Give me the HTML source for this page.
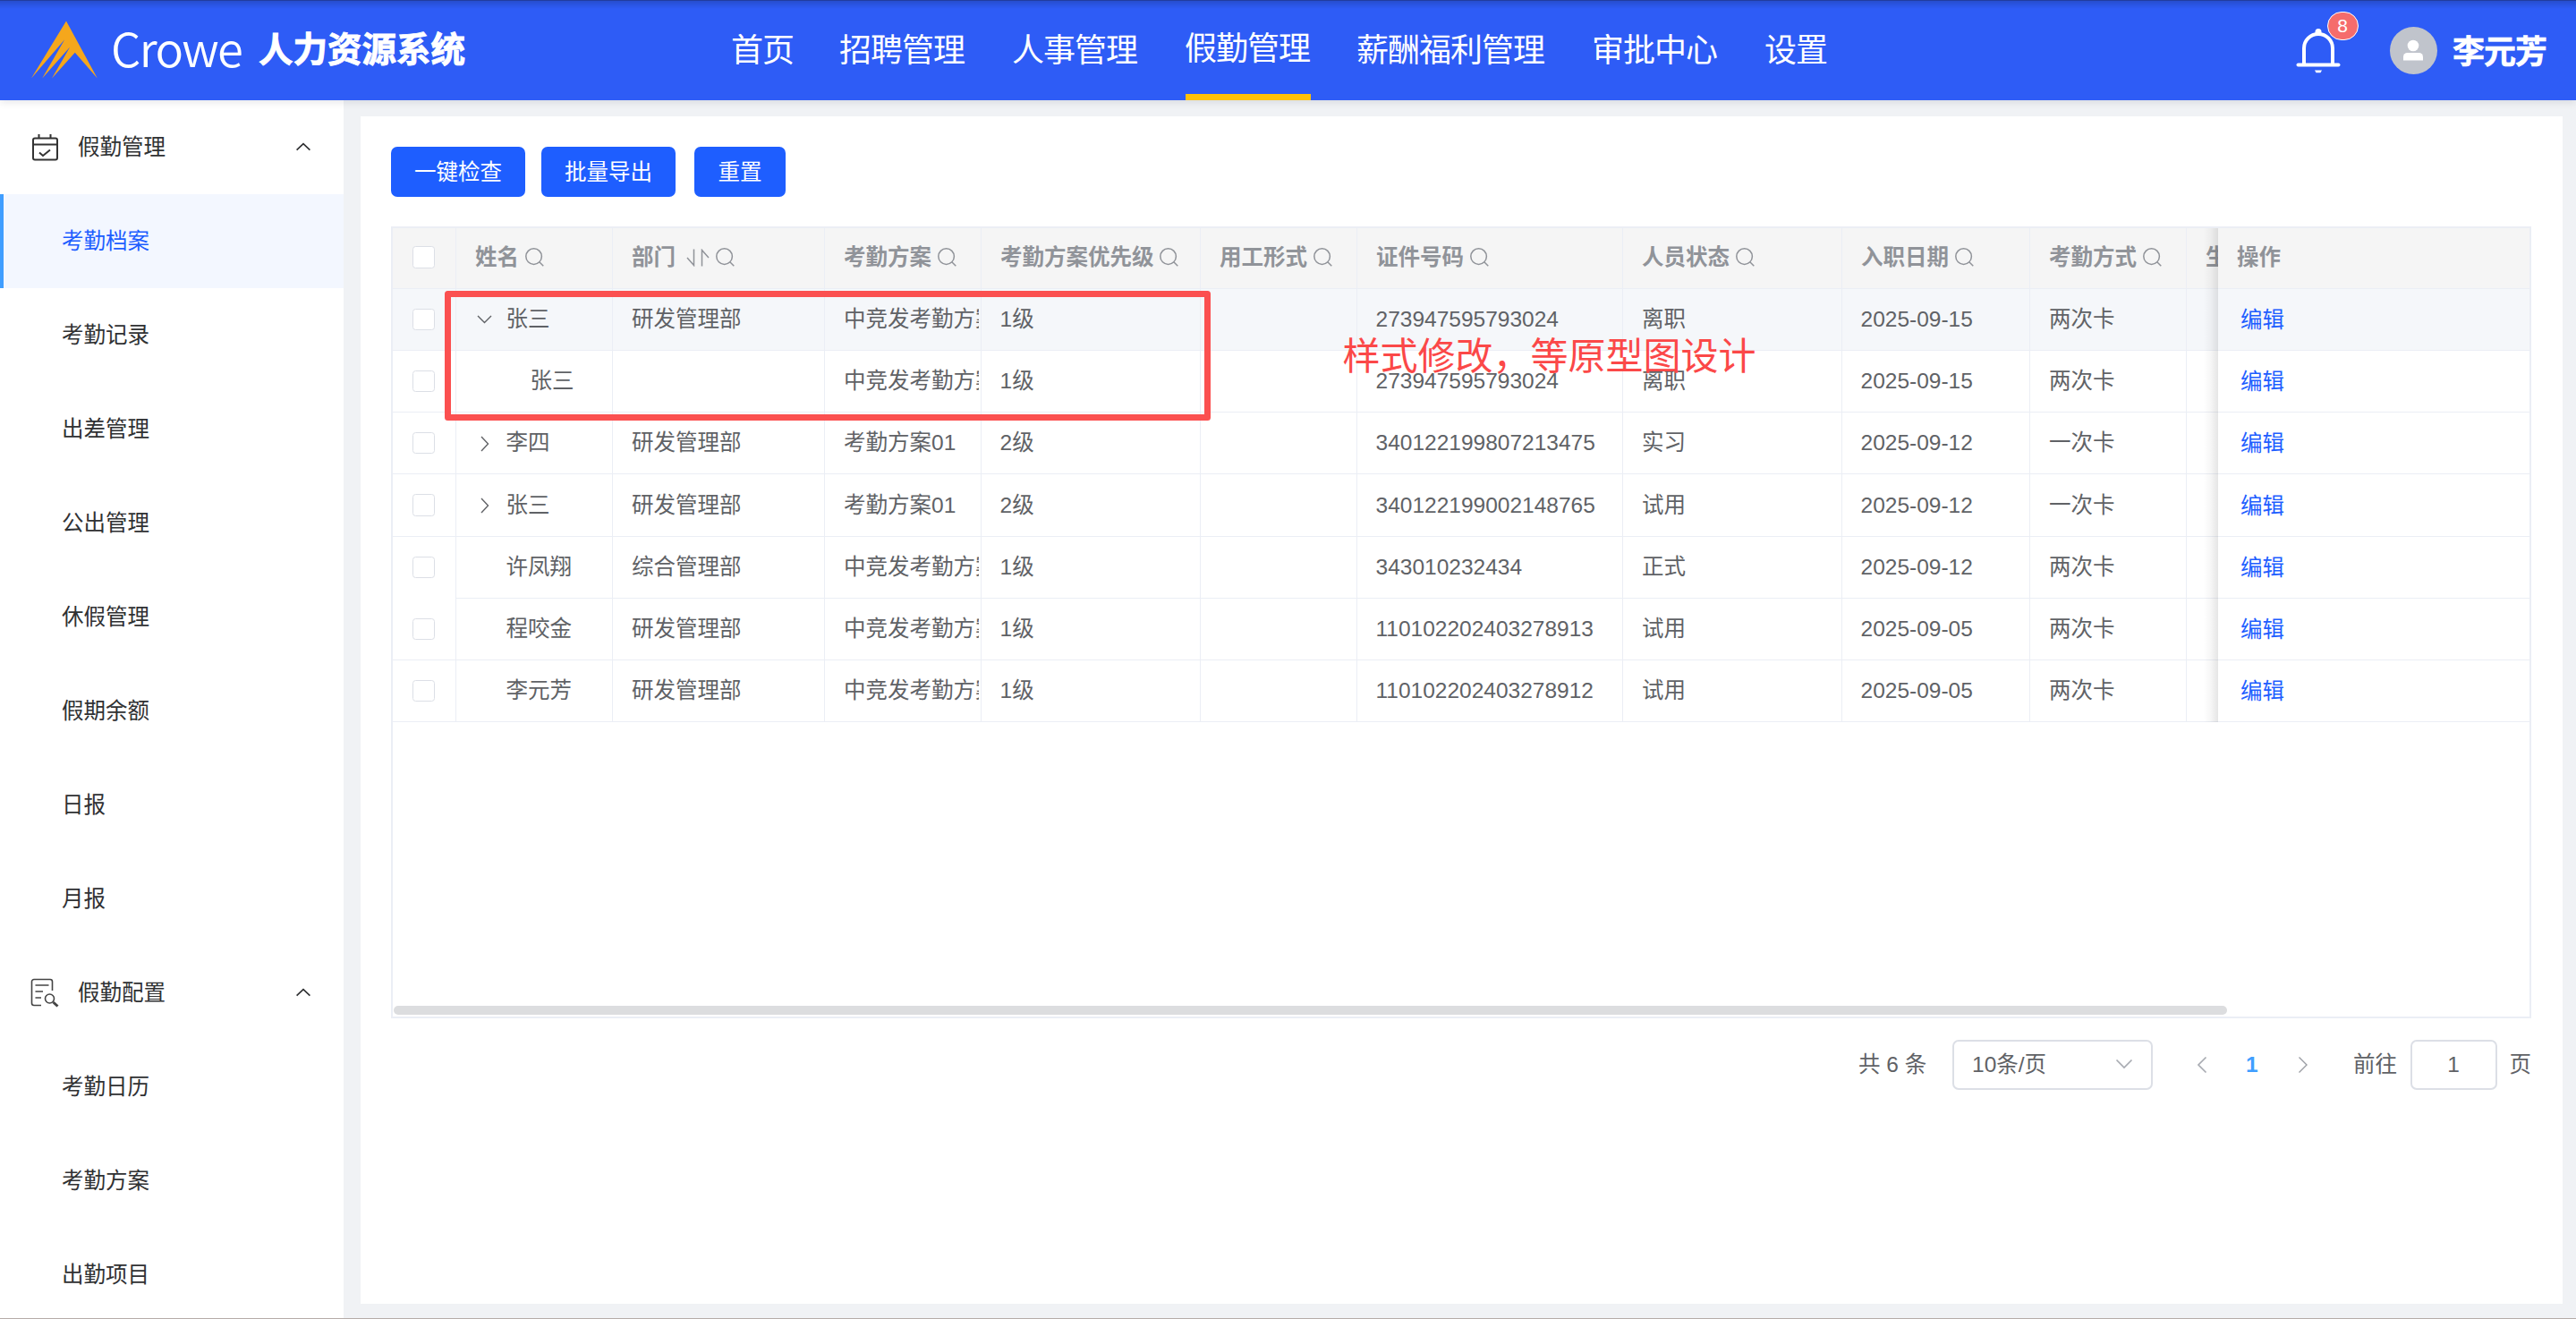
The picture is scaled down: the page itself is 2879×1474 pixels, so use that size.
<!DOCTYPE html>
<html lang="zh-CN">
<head>
<meta charset="utf-8">
<title>Crowe 人力资源系统</title>
<style>
*{box-sizing:border-box;margin:0;padding:0}
html,body{width:2879px;height:1474px;overflow:hidden;background:#f0f2f5}
body{position:relative;font-family:"Liberation Sans","Noto Sans CJK SC",sans-serif;font-size:24.5px;color:#606266;-webkit-font-smoothing:antialiased}
.abs{position:absolute}
/* header */
#hd{position:absolute;left:0;top:0;width:2879px;height:112px;background:#2e5cf6;box-shadow:0 2px 9px rgba(0,21,41,.11);z-index:10}
#hd .topline{position:absolute;left:0;top:0;width:100%;height:10px;background:linear-gradient(rgba(0,0,0,.16),rgba(0,0,0,0));border-top:1px solid rgba(25,35,90,.55)}
#logo{position:absolute;left:0;top:0}
#crowe{position:absolute;left:124px;top:10px;font-family:"Noto Sans CJK SC","Liberation Sans",sans-serif;font-weight:350;font-size:52.5px;line-height:84px;color:#fff;letter-spacing:-1.6px;white-space:nowrap}
#sys{position:absolute;left:289px;top:0;font-weight:bold;font-size:38.5px;line-height:112px;-webkit-text-stroke:0.9px #fff;color:#fff;white-space:nowrap;font-family:"Liberation Sans","Noto Sans CJK SC",sans-serif}
.nav{position:absolute;top:0;height:112px;line-height:113px;font-size:36px;letter-spacing:-1px;color:#fff;white-space:nowrap;font-family:"Liberation Sans","Noto Sans CJK SC",sans-serif}
.nav.on{line-height:109px}
.nav.on:after{content:"";position:absolute;left:1px;right:-1px;bottom:0;height:7px;background:#ffc107}
#uname{position:absolute;left:2741px;top:0;line-height:117px;font-size:36px;letter-spacing:-1px;-webkit-text-stroke:0.6px #fff;font-weight:bold;color:#fff;font-family:"Liberation Sans","Noto Sans CJK SC",sans-serif}
#avatar{position:absolute;left:2670.5px;top:29.5px;width:53px;height:53px;border-radius:50%;background:#c0c4cc}
#badge{position:absolute;left:2600.7px;top:12.6px;width:35px;height:32px;border-radius:17px;background:#f56c6c;border:1.5px solid #fff;color:#fff;font-size:21px;line-height:29px;text-align:center}
/* sidebar */
#sb{position:absolute;left:0;top:112px;width:384px;height:1361px;background:#fff}
.mi{position:absolute;left:0;width:384px;height:105px;line-height:106.5px;color:#303133;white-space:nowrap;font-family:"Liberation Sans","Noto Sans CJK SC",sans-serif}
.mi span{position:absolute;left:69px}
.mi.top span{left:87px}
.mi.act{background:#f3f7ff;color:#1e5eff}
.mi.act:before{content:"";position:absolute;left:0;top:0;width:4px;height:100%;background:#409eff}
.mi svg{position:absolute}
/* card */
#card{position:absolute;left:403px;top:130px;width:2461px;height:1327px;background:#fff}
.btn{position:absolute;top:164px;height:56px;line-height:58px;border-radius:7px;background:#1e5eff;color:#fff;text-align:center;font-size:24.5px;font-family:"Liberation Sans","Noto Sans CJK SC",sans-serif}
/* table */
#tb{position:absolute;left:437px;top:253px;width:2392px;height:885px;border:2px solid #ebeef5;background:#fff;overflow:hidden}
.row{position:absolute;left:0;width:2388px;border-bottom:1px solid #ebeef5}
.row.h{background:#f5f5f5;color:#909399;font-weight:bold}
.row.hv{background:#f5f7fa}
.c{position:absolute;top:0;height:100%;border-right:1px solid #ebeef5;white-space:nowrap;overflow:hidden;padding-left:21px;font-family:"Liberation Sans","Noto Sans CJK SC",sans-serif}
.row.h .c{font-family:"Liberation Sans","Noto Sans CJK SC",sans-serif;display:flex;align-items:center}
.row.h .ht{position:relative;top:-1px}
.ck{position:absolute;left:22.3px;width:24.5px;height:24.5px;border:1.75px solid #dcdfe6;border-radius:3.5px;background:#fff}
.lk{color:#1e5eff}

.si{display:block;margin-left:6.5px;margin-top:-3px;flex:none}
.so{display:block;margin-left:12px;margin-top:-2px;flex:none}
.ch{position:absolute}
.tx{overflow:hidden;margin-right:2px}
#fix{position:absolute;background:#fff}
#fix:before{content:"";position:absolute;left:-16px;top:0;width:16px;height:100%;background:linear-gradient(to right,rgba(0,0,0,0),rgba(0,0,0,.03) 45%,rgba(0,0,0,.10))}
.frow{position:absolute;left:0;width:100%;border-bottom:1px solid #ebeef5;white-space:nowrap;font-family:"Liberation Sans","Noto Sans CJK SC",sans-serif;background:#fff}
.frow.h{background:#f5f5f5;color:#909399;font-weight:bold}
.frow span{position:relative;top:0.5px}
.frow.h span{top:-1.5px}
.frow.hv{background:#f5f7fa}
#scroll{position:absolute;left:1px;top:868.6px;width:2049px;height:10.2px;border-radius:5px;background:#dcdddf}
#redbox{position:absolute;left:497px;top:325.3px;width:855.5px;height:144.7px;border:7.2px solid #fb5050;border-radius:3.5px;z-index:5}
#redtxt{position:absolute;left:1500.5px;top:369px;font-size:42px;line-height:60px;color:#fb4848;white-space:nowrap;z-index:5;font-family:"Liberation Sans","Noto Sans CJK SC",sans-serif}
.pg{position:absolute;top:1162px;height:56px;line-height:56px;white-space:nowrap;color:#606266}
.box{border:2px solid #dcdfe6;border-radius:7px;background:#fff}
#bottomline{position:absolute;left:0;top:1473px;width:2879px;height:1px;background:#b5aca8}
</style>
</head>
<body>
<div id="hd">
<div class="topline"></div>
<svg id="logo" width="130" height="112" viewBox="0 0 130 112"><polygon fill="#f5a71c" points="74,23.5 108.8,87.6 83.8,58.7 58,87.6 78.2,52.4 47.2,87.6 72.2,44.2 35,87.6"/></svg>
<div id="crowe">Crowe</div>
<div id="sys">人力资源系统</div>
<div class="nav" style="left:817px">首页</div>
<div class="nav" style="left:938px">招聘管理</div>
<div class="nav" style="left:1131px">人事管理</div>
<div class="nav on" style="left:1324px">假勤管理</div>
<div class="nav" style="left:1516px">薪酬福利管理</div>
<div class="nav" style="left:1779px">审批中心</div>
<div class="nav" style="left:1972px">设置</div>
<svg class="abs" style="left:2560px;top:28px" width="62" height="58" viewBox="0 0 62 58"><g fill="none" stroke="#fff" stroke-width="4" stroke-linecap="round" stroke-linejoin="round"><path d="M8.5 44.5 H53.5"/><path d="M15 44 V26 a16 16 0 0 1 32 0 V44"/></g><circle cx="31" cy="7.5" r="3.5" fill="#fff"/><path d="M27 50.5 h8 l-1.5 2.7 h-5z" fill="#fff"/></svg>
<div id="badge">8</div>
<div id="avatar"><svg width="53" height="53" viewBox="0 0 53 53"><circle cx="26" cy="21" r="6.3" fill="#fff"/><path d="M15 37.5 v-4 a4.5 4.5 0 0 1 4.5 -4.5 h13 a4.5 4.5 0 0 1 4.5 4.5 v4z" fill="#fff"/></svg></div>
<div id="uname">李元芳</div>
</div>

<div id="sb">
<div class="mi top" style="top:0"><svg style="left:35px;top:37px" width="32" height="32" viewBox="0 0 32 32" fill="none" stroke="#333" stroke-width="2"><rect x="2" y="5.5" width="27" height="24" rx="2"/><path d="M2 12.5 H29 M8.5 1 V6 M21.5 1 V6 M9 21.5 l4 3.5 l8-6.5"/></svg><span>假勤管理</span><svg style="left:329px;top:46px" width="20" height="12" viewBox="0 0 20 12" fill="none" stroke="#303133" stroke-width="1.7"><path d="M2.6 9.6 L10 2.6 L17.4 9.6"/></svg></div>
<div class="mi act" style="top:105px"><span>考勤档案</span></div>
<div class="mi" style="top:210px"><span>考勤记录</span></div>
<div class="mi" style="top:315px"><span>出差管理</span></div>
<div class="mi" style="top:420px"><span>公出管理</span></div>
<div class="mi" style="top:525px"><span>休假管理</span></div>
<div class="mi" style="top:630px"><span>假期余额</span></div>
<div class="mi" style="top:735px"><span>日报</span></div>
<div class="mi" style="top:840px"><span>月报</span></div>
<div class="mi top" style="top:945px"><svg style="left:34px;top:36px" width="34" height="34" viewBox="0 0 34 34" fill="none" stroke="#444" stroke-width="1.6"><path d="M12 30.5 H4 a2.5 2.5 0 0 1 -2.5 -2.5 V4 a2.5 2.5 0 0 1 2.5 -2.5 H22 a2.5 2.5 0 0 1 2.5 2.5 V14"/><path d="M5.5 8 H20.5 M5.5 15 H14 M5.5 22 H12"/><circle cx="21.5" cy="23" r="5"/><path d="M25.5 27 L30.5 31.5" stroke-width="3"/></svg><span>假勤配置</span><svg style="left:329px;top:46px" width="20" height="12" viewBox="0 0 20 12" fill="none" stroke="#303133" stroke-width="1.7"><path d="M2.6 9.6 L10 2.6 L17.4 9.6"/></svg></div>
<div class="mi" style="top:1050px"><span>考勤日历</span></div>
<div class="mi" style="top:1155px"><span>考勤方案</span></div>
<div class="mi" style="top:1260px"><span>出勤项目</span></div>
</div>

<div id="card"></div>
<div class="btn" style="left:437px;width:150px">一键检查</div>
<div class="btn" style="left:605px;width:150px">批量导出</div>
<div class="btn" style="left:776px;width:102px">重置</div>

<div id="tb">
<div class="row h" style="top:0;height:68px;line-height:67px"><div class="c" style="left:0px;width:71px;padding:0;display:block"><div class="ck" style="top:20.2px"></div></div><div class="c" style="left:71px;width:175px;"><span class="ht">姓名</span><svg class="si" width="21" height="21" viewBox="0 0 21 21" fill="none" stroke="#909399" stroke-width="1.5"><circle cx="9.6" cy="9.6" r="8.8"/><path d="M15.8 15.8 L20.3 20.3"/></svg></div><div class="c" style="left:246px;width:237px;"><span class="ht">部门</span><svg class="so" width="26" height="20" viewBox="0 0 26 20" fill="none" stroke="#909399" stroke-width="1.5"><path d="M8.5 0.5 V18.5 L1 10 M17.5 19.5 V1.5 L25 10"/></svg><svg class="si" width="21" height="21" viewBox="0 0 21 21" fill="none" stroke="#909399" stroke-width="1.5"><circle cx="9.6" cy="9.6" r="8.8"/><path d="M15.8 15.8 L20.3 20.3"/></svg></div><div class="c" style="left:483px;width:175px;"><span class="ht">考勤方案</span><svg class="si" width="21" height="21" viewBox="0 0 21 21" fill="none" stroke="#909399" stroke-width="1.5"><circle cx="9.6" cy="9.6" r="8.8"/><path d="M15.8 15.8 L20.3 20.3"/></svg></div><div class="c" style="left:658px;width:245px;"><span class="ht">考勤方案优先级</span><svg class="si" width="21" height="21" viewBox="0 0 21 21" fill="none" stroke="#909399" stroke-width="1.5"><circle cx="9.6" cy="9.6" r="8.8"/><path d="M15.8 15.8 L20.3 20.3"/></svg></div><div class="c" style="left:903px;width:175px;"><span class="ht">用工形式</span><svg class="si" width="21" height="21" viewBox="0 0 21 21" fill="none" stroke="#909399" stroke-width="1.5"><circle cx="9.6" cy="9.6" r="8.8"/><path d="M15.8 15.8 L20.3 20.3"/></svg></div><div class="c" style="left:1078px;width:297px;"><span class="ht">证件号码</span><svg class="si" width="21" height="21" viewBox="0 0 21 21" fill="none" stroke="#909399" stroke-width="1.5"><circle cx="9.6" cy="9.6" r="8.8"/><path d="M15.8 15.8 L20.3 20.3"/></svg></div><div class="c" style="left:1375px;width:245px;"><span class="ht">人员状态</span><svg class="si" width="21" height="21" viewBox="0 0 21 21" fill="none" stroke="#909399" stroke-width="1.5"><circle cx="9.6" cy="9.6" r="8.8"/><path d="M15.8 15.8 L20.3 20.3"/></svg></div><div class="c" style="left:1620px;width:210px;"><span class="ht">入职日期</span><svg class="si" width="21" height="21" viewBox="0 0 21 21" fill="none" stroke="#909399" stroke-width="1.5"><circle cx="9.6" cy="9.6" r="8.8"/><path d="M15.8 15.8 L20.3 20.3"/></svg></div><div class="c" style="left:1830px;width:175px;"><span class="ht">考勤方式</span><svg class="si" width="21" height="21" viewBox="0 0 21 21" fill="none" stroke="#909399" stroke-width="1.5"><circle cx="9.6" cy="9.6" r="8.8"/><path d="M15.8 15.8 L20.3 20.3"/></svg></div><div class="c" style="left:2005px;width:210px;"><span class="ht">生效日期</span><svg class="si" width="21" height="21" viewBox="0 0 21 21" fill="none" stroke="#909399" stroke-width="1.5"><circle cx="9.6" cy="9.6" r="8.8"/><path d="M15.8 15.8 L20.3 20.3"/></svg></div></div>
<div class="row hv" style="top:68px;height:69px;line-height:68px"><div class="c" style="left:0px;width:71px;padding:0"><div class="ck" style="top:21.8px"></div></div><div class="c" style="left:71px;width:175px;padding-left:55.5px"><svg class="ch" style="left:23px;top:50%;margin-top:-5px" width="17" height="10" viewBox="0 0 17 10" fill="none" stroke="#606266" stroke-width="1.4"><path d="M1 1 L8.5 8.5 L16 1"/></svg><span>张三</span></div><div class="c" style="left:246px;width:237px;"><div class="tx">研发管理部</div></div><div class="c" style="left:483px;width:175px;"><div class="tx">中竞发考勤方案</div></div><div class="c" style="left:658px;width:245px;padding-left:20.5px"><div class="tx">1级</div></div><div class="c" style="left:903px;width:175px;"></div><div class="c" style="left:1078px;width:297px;padding-left:20.5px"><div class="tx">273947595793024</div></div><div class="c" style="left:1375px;width:245px;"><div class="tx">离职</div></div><div class="c" style="left:1620px;width:210px;padding-left:20.5px"><div class="tx">2025-09-15</div></div><div class="c" style="left:1830px;width:175px;"><div class="tx">两次卡</div></div><div class="c" style="left:2005px;width:210px;"></div></div>
<div class="row" style="top:137px;height:69px;line-height:68px"><div class="c" style="left:0px;width:71px;padding:0"><div class="ck" style="top:21.8px"></div></div><div class="c" style="left:71px;width:175px;padding-left:82.5px"><span>张三</span></div><div class="c" style="left:246px;width:237px;"></div><div class="c" style="left:483px;width:175px;"><div class="tx">中竞发考勤方案</div></div><div class="c" style="left:658px;width:245px;padding-left:20.5px"><div class="tx">1级</div></div><div class="c" style="left:903px;width:175px;"></div><div class="c" style="left:1078px;width:297px;padding-left:20.5px"><div class="tx">273947595793024</div></div><div class="c" style="left:1375px;width:245px;"><div class="tx">离职</div></div><div class="c" style="left:1620px;width:210px;padding-left:20.5px"><div class="tx">2025-09-15</div></div><div class="c" style="left:1830px;width:175px;"><div class="tx">两次卡</div></div><div class="c" style="left:2005px;width:210px;"></div></div>
<div class="row" style="top:206px;height:69px;line-height:68px"><div class="c" style="left:0px;width:71px;padding:0"><div class="ck" style="top:21.8px"></div></div><div class="c" style="left:71px;width:175px;padding-left:55.5px"><svg class="ch" style="left:27px;top:50%;margin-top:-8.5px" width="10" height="18" viewBox="0 0 10 18" fill="none" stroke="#606266" stroke-width="1.4"><path d="M1 1 L8.5 9 L1 17"/></svg><span>李四</span></div><div class="c" style="left:246px;width:237px;"><div class="tx">研发管理部</div></div><div class="c" style="left:483px;width:175px;"><div class="tx">考勤方案01</div></div><div class="c" style="left:658px;width:245px;padding-left:20.5px"><div class="tx">2级</div></div><div class="c" style="left:903px;width:175px;"></div><div class="c" style="left:1078px;width:297px;padding-left:20.5px"><div class="tx">340122199807213475</div></div><div class="c" style="left:1375px;width:245px;"><div class="tx">实习</div></div><div class="c" style="left:1620px;width:210px;padding-left:20.5px"><div class="tx">2025-09-12</div></div><div class="c" style="left:1830px;width:175px;"><div class="tx">一次卡</div></div><div class="c" style="left:2005px;width:210px;"></div></div>
<div class="row" style="top:275px;height:70px;line-height:69px"><div class="c" style="left:0px;width:71px;padding:0"><div class="ck" style="top:22.2px"></div></div><div class="c" style="left:71px;width:175px;padding-left:55.5px"><svg class="ch" style="left:27px;top:50%;margin-top:-8.5px" width="10" height="18" viewBox="0 0 10 18" fill="none" stroke="#606266" stroke-width="1.4"><path d="M1 1 L8.5 9 L1 17"/></svg><span>张三</span></div><div class="c" style="left:246px;width:237px;"><div class="tx">研发管理部</div></div><div class="c" style="left:483px;width:175px;"><div class="tx">考勤方案01</div></div><div class="c" style="left:658px;width:245px;padding-left:20.5px"><div class="tx">2级</div></div><div class="c" style="left:903px;width:175px;"></div><div class="c" style="left:1078px;width:297px;padding-left:20.5px"><div class="tx">340122199002148765</div></div><div class="c" style="left:1375px;width:245px;"><div class="tx">试用</div></div><div class="c" style="left:1620px;width:210px;padding-left:20.5px"><div class="tx">2025-09-12</div></div><div class="c" style="left:1830px;width:175px;"><div class="tx">一次卡</div></div><div class="c" style="left:2005px;width:210px;"></div></div>
<div class="row" style="top:345px;height:69px;line-height:68px"><div class="c" style="left:0px;width:71px;padding:0;height:calc(100% + 1px);background:#fff;z-index:1"><div class="ck" style="top:21.8px"></div></div><div class="c" style="left:71px;width:175px;padding-left:55.5px"><span>许凤翔</span></div><div class="c" style="left:246px;width:237px;"><div class="tx">综合管理部</div></div><div class="c" style="left:483px;width:175px;"><div class="tx">中竞发考勤方案</div></div><div class="c" style="left:658px;width:245px;padding-left:20.5px"><div class="tx">1级</div></div><div class="c" style="left:903px;width:175px;"></div><div class="c" style="left:1078px;width:297px;padding-left:20.5px"><div class="tx">343010232434</div></div><div class="c" style="left:1375px;width:245px;"><div class="tx">正式</div></div><div class="c" style="left:1620px;width:210px;padding-left:20.5px"><div class="tx">2025-09-12</div></div><div class="c" style="left:1830px;width:175px;"><div class="tx">两次卡</div></div><div class="c" style="left:2005px;width:210px;"></div></div>
<div class="row" style="top:414px;height:69px;line-height:68px"><div class="c" style="left:0px;width:71px;padding:0"><div class="ck" style="top:21.8px"></div></div><div class="c" style="left:71px;width:175px;padding-left:55.5px"><span>程咬金</span></div><div class="c" style="left:246px;width:237px;"><div class="tx">研发管理部</div></div><div class="c" style="left:483px;width:175px;"><div class="tx">中竞发考勤方案</div></div><div class="c" style="left:658px;width:245px;padding-left:20.5px"><div class="tx">1级</div></div><div class="c" style="left:903px;width:175px;"></div><div class="c" style="left:1078px;width:297px;padding-left:20.5px"><div class="tx">110102202403278913</div></div><div class="c" style="left:1375px;width:245px;"><div class="tx">试用</div></div><div class="c" style="left:1620px;width:210px;padding-left:20.5px"><div class="tx">2025-09-05</div></div><div class="c" style="left:1830px;width:175px;"><div class="tx">两次卡</div></div><div class="c" style="left:2005px;width:210px;"></div></div>
<div class="row" style="top:483px;height:69px;line-height:68px"><div class="c" style="left:0px;width:71px;padding:0"><div class="ck" style="top:21.8px"></div></div><div class="c" style="left:71px;width:175px;padding-left:55.5px"><span>李元芳</span></div><div class="c" style="left:246px;width:237px;"><div class="tx">研发管理部</div></div><div class="c" style="left:483px;width:175px;"><div class="tx">中竞发考勤方案</div></div><div class="c" style="left:658px;width:245px;padding-left:20.5px"><div class="tx">1级</div></div><div class="c" style="left:903px;width:175px;"></div><div class="c" style="left:1078px;width:297px;padding-left:20.5px"><div class="tx">110102202403278912</div></div><div class="c" style="left:1375px;width:245px;"><div class="tx">试用</div></div><div class="c" style="left:1620px;width:210px;padding-left:20.5px"><div class="tx">2025-09-05</div></div><div class="c" style="left:1830px;width:175px;"><div class="tx">两次卡</div></div><div class="c" style="left:2005px;width:210px;"></div></div>
<div id="fix" style="left:2040px;top:0;width:348px;height:552px"><div class="frow h" style="top:0;height:68px;line-height:67px"><span style="margin-left:21px">操作</span></div><div class="frow hv" style="top:68px;height:69px;line-height:68px"><span class="lk" style="margin-left:25px">编辑</span></div><div class="frow" style="top:137px;height:69px;line-height:68px"><span class="lk" style="margin-left:25px">编辑</span></div><div class="frow" style="top:206px;height:69px;line-height:68px"><span class="lk" style="margin-left:25px">编辑</span></div><div class="frow" style="top:275px;height:70px;line-height:69px"><span class="lk" style="margin-left:25px">编辑</span></div><div class="frow" style="top:345px;height:69px;line-height:68px"><span class="lk" style="margin-left:25px">编辑</span></div><div class="frow" style="top:414px;height:69px;line-height:68px"><span class="lk" style="margin-left:25px">编辑</span></div><div class="frow" style="top:483px;height:69px;line-height:68px"><span class="lk" style="margin-left:25px">编辑</span></div></div>
<div id="scroll"></div>
</div>
<div id="redbox"></div>
<div id="redtxt">样式修改，等原型图设计</div>
<div class="pg" style="left:2077px">共 6 条</div>
<div class="pg box" style="left:2182px;width:224px;padding-left:20px;line-height:52px">10条/页<svg class="abs" style="left:180px;top:19px" width="20" height="12" viewBox="0 0 20 12" fill="none" stroke="#a8abb2" stroke-width="1.7"><path d="M1.5 1.5 L10 10 L18.5 1.5"/></svg></div>
<svg class="abs" style="left:2455px;top:1180px" width="12" height="20" viewBox="0 0 12 20" fill="none" stroke="#a8abb2" stroke-width="1.7"><path d="M10.5 1.5 L2 10 L10.5 18.5"/></svg>
<div class="pg" style="left:2510px;color:#409eff;font-weight:bold">1</div>
<svg class="abs" style="left:2568px;top:1180px" width="12" height="20" viewBox="0 0 12 20" fill="none" stroke="#9a9da3" stroke-width="1.4"><path d="M1.5 1.5 L10 10 L1.5 18.5"/></svg>
<div class="pg" style="left:2630px">前往</div>
<div class="pg box" style="left:2693.5px;width:97px;text-align:center;line-height:52px">1</div>
<div class="pg" style="left:2804.5px">页</div>

<div id="bottomline"></div>
</body>
</html>
